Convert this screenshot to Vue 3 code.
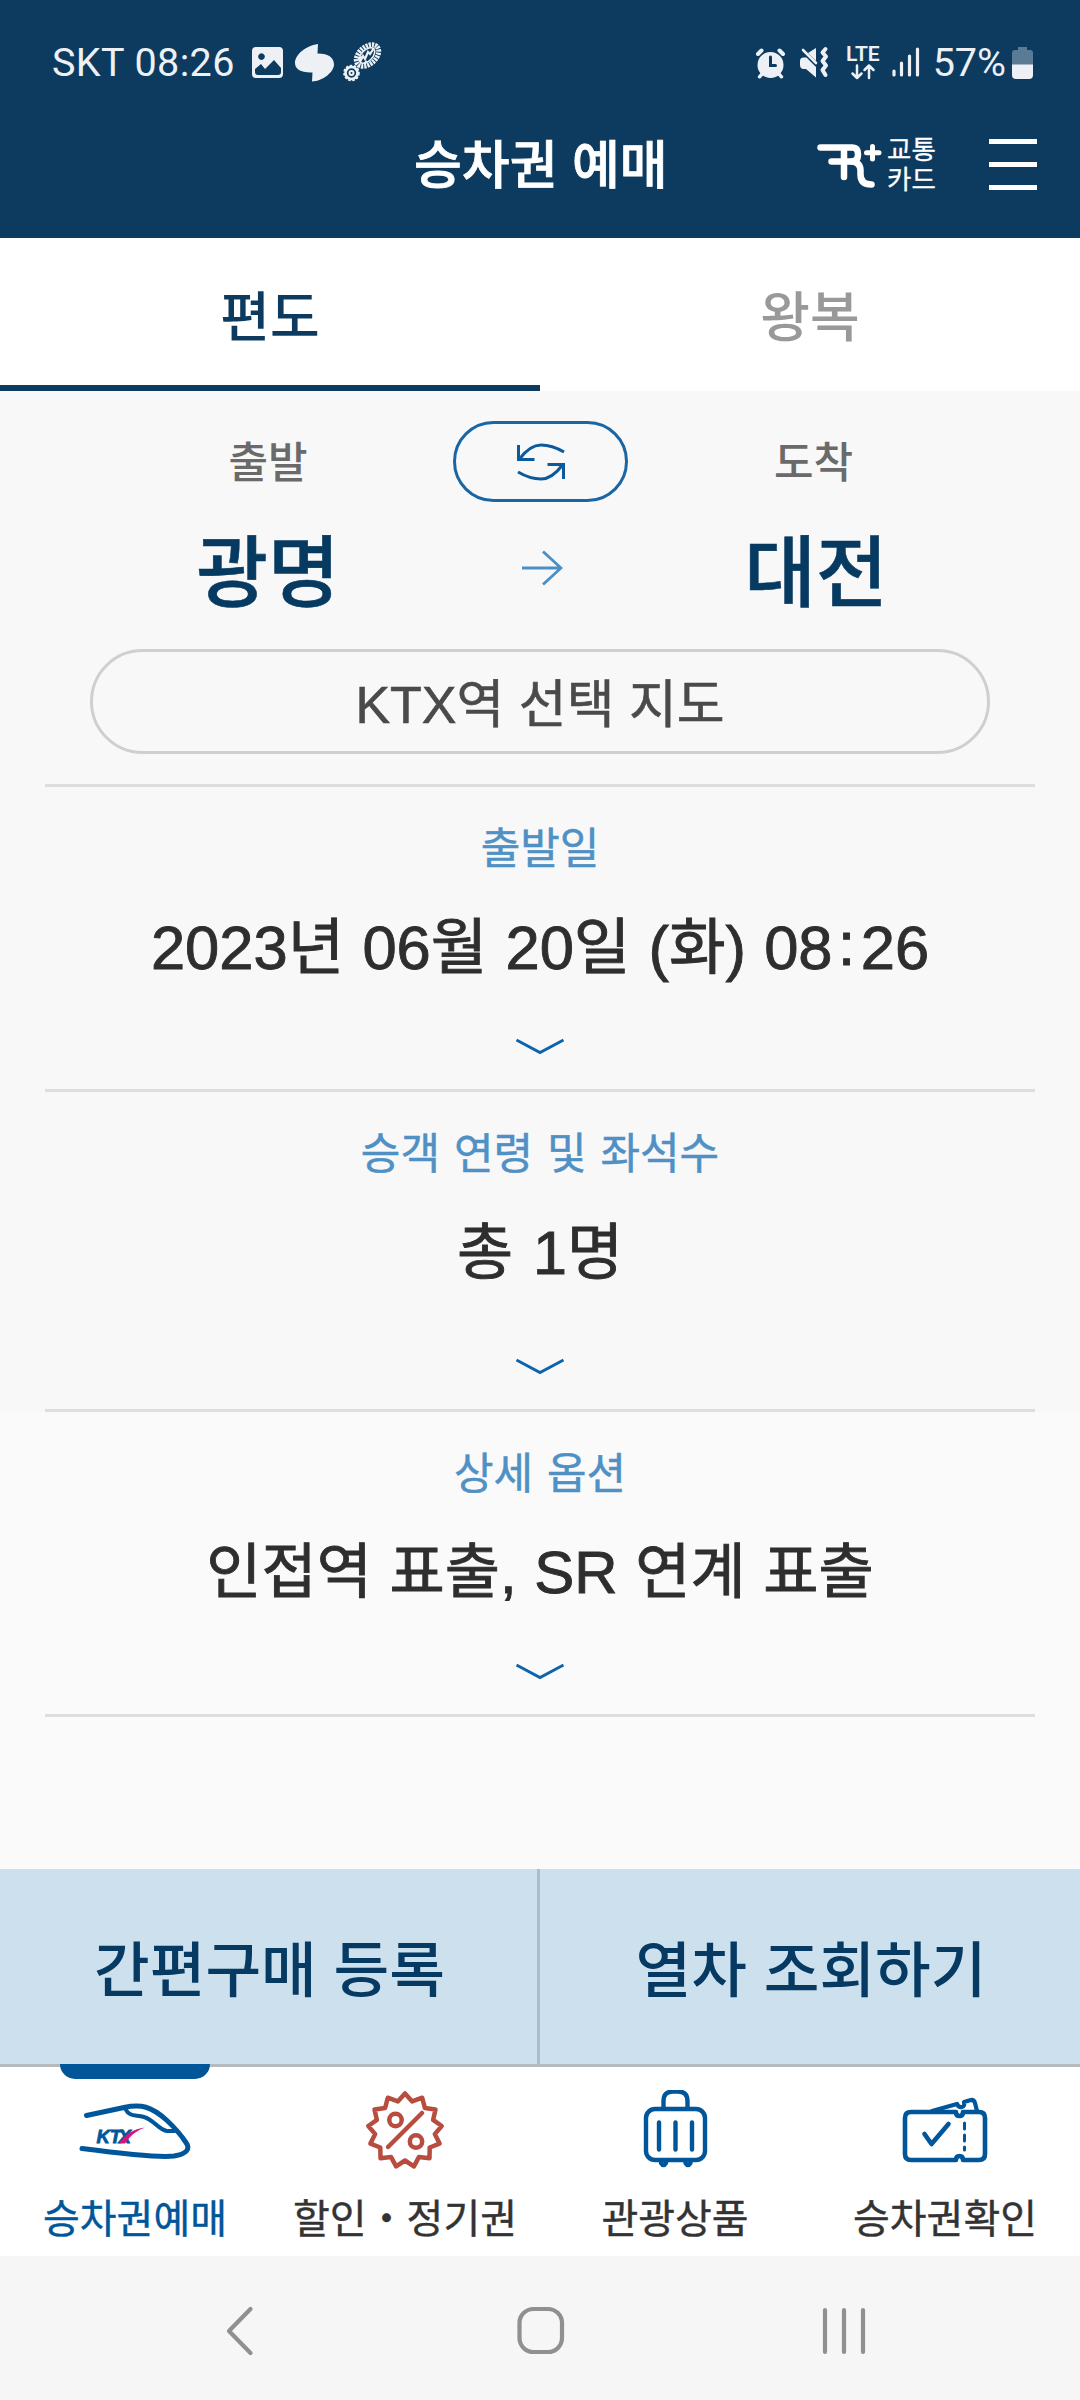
<template>
  <div class="screen">
    <header class="header">
      <div class="status">
        <span class="status-text clock">SKT 08:26</span>
        <svg class="status-left" viewBox="0 0 145 50">
          <!-- imagen -->
          <path
            fill-rule="evenodd"
            d="M11 9h23q4 0 4 4v23q0 4-4 4H11q-4 0-4-4V13q0-4 4-4zM10 31v3q0 3 3 3h20q3 0 3-3v-4l-7-8-9 9-4-5zM16.500 15.300a3.300 3.300 0 1 0 .01 0z"
          />
          <!-- remolino -->
          <path d="M73 6l-.5 9.500C84 15.500 89 20 89 26.500 89 34 78 43 67 43.500l.5-9C56 35 50 31 50 25 50 17 60 8 73 6z" />
          <!-- huella -->
          <g fill="none" stroke="#edf1f5">
            <ellipse cx="122.500" cy="17.500" rx="13" ry="8.500" transform="rotate(-42 122.500 17.500)" stroke-width="5" stroke-dasharray="2.200 .9" />
            <ellipse cx="122" cy="17.500" rx="9.500" ry="5.500" transform="rotate(-46 122 17.500)" stroke-width="1.500" />
            <path d="M115 24l3-6 2 3 3-7 2 2 4-6M113 21l4-2M119 26l3-3" stroke-width="2.200" />
            <circle cx="106.500" cy="35" r="6" stroke-width="2.600" />
            <circle cx="106.500" cy="35" r="7.400" stroke-width="1.800" stroke-dasharray="2.600 1.500" />
            <circle cx="106.500" cy="35" r="2" stroke-width="2" />
          </g>
        </svg>

        <svg class="status-right" viewBox="0 0 175 50">
          <!-- alarma -->
          <circle cx="20.500" cy="27" r="13" />
          <g fill="none" stroke="#edf1f5" stroke-linecap="round">
            <path d="M8 16l3.500-3.500M33 16l-3.500-3.500" stroke-width="4" />
            <path d="M12 36l-2.500 2.800M29 36l2.500 2.800" stroke-width="3.400" />
            <path d="M20.500 19v8.500h5" stroke="#0c3b5f" stroke-width="3" />
          </g>
          <!-- silencio y vibración -->
          <path d="M66 10v13l-8-8zM53.500 19.500h3L66 29v10.500l-10-8.500h-3q-3-.5-3-4v-4q0-3.500 3.500-3.500z" />
          <g fill="none" stroke="#edf1f5" stroke-linecap="round" stroke-linejoin="round">
            <path d="M53 12l13 13" stroke-width="2.600" />
            <path d="M75.500 11l-3 3.500 3.500 4-3.500 4.500 3.500 4.500-3.500 4.500 3 5" stroke-width="4" />
          </g>
          <!-- LTE -->
          <text x="96" y="23" class="lte">LTE</text>
          <g fill="none" stroke="#edf1f5" stroke-width="2.500" stroke-linecap="round" stroke-linejoin="round">
            <path d="M107 27.500v12.500M102.500 35.500l4.500 4.500 4.500-4.500M119 40V27.500M114.500 32l4.500-4.500 4.500 4.500" />
          </g>
          <!-- cobertura -->
          <g stroke="#edf1f5" stroke-width="3.200" stroke-linecap="round">
            <path d="M144 33v4M151.500 25v12M159.500 18v19M167.500 11v26" />
          </g>
        </svg>
        <span class="status-text">57%</span>
        <svg class="battery" viewBox="0 0 22 34">
          <path d="M6 1h9v3h3q3 0 3 3v12H0V7q0-3 3-3h3z" fill="#5b7b95" />
          <path d="M0 18.500h21V29q0 4-4 4H4q-4 0-4-4z" fill="#edf1f5" />
        </svg>
      </div>

      <div class="title-bar">
        <h1 class="title">승차권 예매</h1>
        <a class="rail-card">
          <svg class="rail-logo" viewBox="0 0 66 50">
            <g fill="none" stroke="#fff" stroke-width="6.500" stroke-linecap="round" stroke-linejoin="round">
              <path d="M4.500 7.500h32q5.500 0 5.500 7t-6.500 7H15.500" />
              <path d="M28 9v28" />
              <path d="M36 21.500q8.500 1 8.500 9v4q0 10 11 10" />
              <path d="M56.500 6.500v12.500M50.500 12.800h12.500" stroke-width="5" />
            </g>
          </svg>
          <span class="rail-text">교통<br />카드</span>
        </a>
        <button class="menu" aria-label="메뉴"><i></i><i></i><i></i></button>
      </div>
    </header>

    <nav class="tabs">
      <button
        v-for="tab in tabs"
        :key="tab"
        class="tab"
        :class="{ active: tab === activeTab }"
        @click="activeTab = tab"
      >
        {{ tab }}
      </button>
    </nav>

    <main class="content">
      <section class="route">
        <p class="route-label">출발</p>
        <button class="swap" aria-label="출발 도착 바꾸기" @click="swap">
          <svg viewBox="0 0 50 40" class="swap-icon">
            <g fill="none" stroke="#0b5b9c" stroke-width="3">
              <path d="M2.500 3v14.500h16M3.500 17Q14 3 25 3q11 0 23 7" />
              <path d="M47.500 37V22.500h-16M46.500 23Q36 37 25 37q-11 0-23-7" />
            </g>
          </svg>
        </button>
        <p class="route-label">도착</p>

        <p class="station">{{ from }}</p>
        <svg class="route-arrow" viewBox="0 0 42 36">
          <path d="M1 18h39M22 1.500L40 18 22 34.500" fill="none" stroke="#4a8fc6" stroke-width="2.800" />
        </svg>
        <p class="station arrival">{{ to }}</p>
      </section>

      <button class="map-button">KTX역 선택 지도</button>

      <section v-for="row in rows" :key="row.label" class="row" :class="row.id">
        <p class="row-label">{{ row.label }}</p>
        <p class="row-value">
          <template v-for="(part, i) in row.value.split(':')" :key="i"><span v-if="i" class="colon">:</span>{{ part }}</template>
        </p>
        <svg class="chevron" viewBox="0 0 50 17">
          <path d="M1.500 2L25 14.500 48.500 2" fill="none" stroke="#0b64ac" stroke-width="2.900" />
        </svg>
      </section>
    </main>

    <div class="actions">
      <button class="action">간편구매 등록</button>
      <button class="action">열차 조회하기</button>
    </div>

    <nav class="bottom-nav">
      <a class="nav-item active">
        <svg class="nav-icon" viewBox="0 0 130 80">
          <g fill="none" stroke="#00569a" stroke-width="5" stroke-linecap="round" stroke-linejoin="round">
            <path d="M16.500 25.500L54 17.500C71 14 81 16 97 30.500c8 7.500 13 13 19 22 5 7 0 11.500-12 13.500-14 2-50-2-92-7.500" />
            <path d="M55 18.500c5 9 10 6 19 8.500 10 3 15 13 23 14h8" stroke-width="4" />
          </g>
          <text x="26.500" y="53" class="ktx">KT</text>
          <text x="48.500" y="53" class="ktx">X</text>
          <path d="M49 53.500q9-14 26-16-12 4-20 16z" fill="#d6147d" />
        </svg>
        <span>승차권예매</span>
      </a>
      <a class="nav-item">
        <svg class="nav-icon" viewBox="0 0 130 80">
          <g fill="none" stroke="#b84c3e" stroke-width="4.500" stroke-linejoin="round" stroke-linecap="round">
            <polygon :points="burst" />
            <circle cx="55.500" cy="30" r="6.200" />
            <circle cx="76" cy="51.500" r="6.200" />
            <path d="M82 23L48 57" />
          </g>
        </svg>
        <span>할인・정기권</span>
      </a>
      <a class="nav-item">
        <svg class="nav-icon" viewBox="0 0 130 80">
          <g fill="none" stroke="#00569a" stroke-width="4.400" stroke-linecap="round">
            <rect x="36" y="19" width="59" height="51" rx="9" />
            <path d="M53.500 18V11q0-9.500 9.500-9.500h5q9.500 0 9.500 9.500v7" />
            <path d="M49 32.500v27M65.500 32.500v27M82 32.500v27" />
            <path d="M51 73q2.500 4 5 0M75.500 73q2.500 4 5 0" />
          </g>
        </svg>
        <span>관광상품</span>
      </a>
      <a class="nav-item">
        <svg class="nav-icon" viewBox="0 0 130 80">
          <g fill="none" stroke="#00569a" stroke-width="4.600" stroke-linecap="round" stroke-linejoin="round">
            <path d="M76 22H31q-6 0-6 6v36q0 6 6 6h45q0-4 3.500-4t3.500 4h16q6 0 6-6V28q0-6-6-6H83q0 4-3.500 4T76 22z" />
            <path d="M52 21l25-7q2 4 5 3 3-.5 2-5l7-2q3-.5 4 3l2 8" stroke-width="4.200" />
            <path d="M44.500 44l7 10 17-20" />
            <path d="M84.500 33v27" stroke-width="3" stroke-dasharray="6 6" />
          </g>
        </svg>
        <span>승차권확인</span>
      </a>
    </nav>

    <footer class="system-bar">
      <svg viewBox="0 0 1080 144">
        <g fill="none" stroke="#909090" stroke-width="4.200" stroke-linecap="round" stroke-linejoin="round">
          <path d="M250.500 53L229 75l21.500 22" />
          <rect x="519.500" y="53" width="42.500" height="43" rx="14" />
          <path d="M825 54v42M844 54v42M863 54v42" />
        </g>
      </svg>
    </footer>
  </div>
</template>

<script setup>
import { ref } from 'vue'

const tabs = ['편도', '왕복']
const activeTab = ref('편도')

const from = ref('광명')
const to = ref('대전')

const swap = () => {
  const tmp = from.value
  from.value = to.value
  to.value = tmp
}

const rows = [
  { id: 'date', label: '출발일', value: '2023년 06월 20일 (화) 08:26' },
  { id: 'people', label: '승객 연령 및 좌석수', value: '총 1명' },
  { id: 'options', label: '상세 옵션', value: '인접역 표출, SR 연계 표출' },
]

// Sello de descuento: estrella de 13 puntas
const burst = Array.from({ length: 26 }, (_, i) => {
  const r = i % 2 ? 30 : 37
  const a = (Math.PI * i) / 13 - Math.PI / 2
  return `${(65 + r * Math.cos(a)).toFixed(1)},${(40.5 + r * Math.sin(a)).toFixed(1)}`
}).join(' ')
</script>

<style>
body {
  background: #fafafa;
}
</style>

<style scoped>
.screen {
  width: 1080px;
  height: 2400px;
  display: flex;
  flex-direction: column;
  overflow: hidden;
  font-family: 'Liberation Sans', 'Noto Sans CJK KR', sans-serif;
  font-weight: 500;
  color: #2e2e2e;
}

p,
h1 {
  margin: 0;
}

button {
  padding: 0;
  border: 0;
  background: none;
  font: inherit;
  color: inherit;
}

/* Cabecera */
.header {
  height: 238px;
  flex: none;
  background: #0c3b5f;
  color: #fff;
}

.status {
  height: 100px;
  padding: 25px 46px 0 52px;
  box-sizing: border-box;
  display: flex;
  align-items: center;
}

.status-text {
  font-family: Roboto, sans-serif;
  font-size: 39.5px;
  font-weight: 400;
  line-height: 50px;
  color: #edf1f5;
  white-space: nowrap;
}

.clock {
  width: 193px;
  letter-spacing: 0.4px;
}

.status svg {
  flex: none;
  fill: #edf1f5;
}

.status-left {
  width: 145px;
  height: 50px;
}

.status-right {
  width: 175px;
  height: 50px;
  margin-left: auto;
  margin-right: 8px;
}

.battery {
  width: 22px;
  height: 34px;
  margin-left: 6px;
}

.lte {
  font-family: Roboto, sans-serif;
  font-size: 21px;
  font-weight: 600;
}

.title-bar {
  height: 138px;
  padding: 0 43px 9px 0;
  box-sizing: border-box;
  display: grid;
  grid-template-columns: 414px 402px 173px 48px;
  align-items: center;
}

.title {
  grid-column: 2;
  padding-top: 3px;
  font-size: 52px;
  font-weight: 500;
  line-height: 60px;
  -webkit-text-stroke: 0.8px #fff;
}

.rail-card {
  display: flex;
  align-items: center;
  gap: 5px;
}

.rail-logo {
  width: 66px;
  height: 50px;
}

.rail-text {
  font-size: 26.5px;
  font-weight: 400;
  line-height: 30px;
  -webkit-text-stroke: 0.3px #fff;
}

.menu {
  width: 48px;
  height: 51px;
  display: flex;
  flex-direction: column;
  justify-content: space-between;
}

.menu i {
  width: 48px;
  height: 5px;
  background: #fff;
}

/* Pestañas */
.tabs {
  height: 153px;
  flex: none;
  display: flex;
  background: #fff;
}

.tab {
  flex: 1;
  padding-top: 3px;
  border-bottom: 6px solid transparent;
  font-size: 54px;
  color: #999;
}

.tab.active {
  color: #0c3b5f;
  border-bottom-color: #0c3b5f;
}

/* Contenido */
.content {
  flex: 1;
  display: flex;
  flex-direction: column;
  background: linear-gradient(#f8f8f8 1021px, #fafafa 1021px);
}

.route {
  height: 255px;
  padding-top: 30px;
  padding-left: 83px;
  box-sizing: border-box;
  display: grid;
  grid-template-columns: 370px 175px 371px;
  grid-template-rows: 81px 131px;
  justify-items: center;
  align-items: center;
}

.route-label {
  padding-top: 3px;
  font-size: 43px;
  line-height: 60px;
  color: #6a6a6a;
}

.swap {
  width: 175px;
  height: 81px;
  box-sizing: border-box;
  border: 3px solid #1a66a3;
  border-radius: 41px;
  display: flex;
  align-items: center;
  justify-content: center;
}

.swap-icon {
  width: 50px;
  height: 40px;
}

.station {
  padding-top: 12px;
  font-size: 78px;
  font-weight: 500;
  line-height: 100px;
  color: #073a61;
  -webkit-text-stroke: 0.6px #073a61;
}

.station.arrival {
  padding-left: 5px;
}

.route-arrow {
  width: 42px;
  height: 36px;
  margin-left: 3px;
}

.map-button {
  width: 900px;
  height: 105px;
  margin: 3px auto 0;
  padding-bottom: 2px;
  flex: none;
  box-sizing: border-box;
  border: 3px solid #cfcfcf;
  border-radius: 53px;
  font-size: 52px;
  font-weight: 400;
  color: #4a4a4a;
  -webkit-text-stroke: 0.6px #4a4a4a;
}

.row {
  height: 305px;
  margin: 0 45px;
  flex: none;
  box-sizing: border-box;
  border-bottom: 3px solid #dedede;
  display: flex;
  flex-direction: column;
  align-items: center;
}

.row.date {
  height: 308px;
  margin-top: 30px;
  border-top: 3px solid #dedede;
}

.row.people {
  height: 320px;
}

.row-label {
  margin-top: 32px;
  font-size: 43px;
  font-weight: 400;
  line-height: 60px;
  word-spacing: 2px;
  color: #4f90c5;
  -webkit-text-stroke: 0.5px #4f90c5;
}

.row-value {
  margin-top: 29px;
  font-size: 60px;
  font-weight: 400;
  line-height: 80px;
  word-spacing: 1px;
  white-space: nowrap;
  -webkit-text-stroke: 0.9px #2e2e2e;
}

.people .row-value {
  font-size: 61px;
  word-spacing: 3px;
}

.date .row-value {
  font-size: 61.5px;
}

.colon {
  padding: 0 5.5px;
  vertical-align: 4px;
  line-height: 1;
}

.chevron {
  width: 50px;
  height: 17px;
  margin-top: auto;
  margin-bottom: 34px;
}

/* Botones de compra */
.actions {
  height: 198px;
  flex: none;
  box-sizing: border-box;
  display: flex;
  border-bottom: 3px solid #b6babd;
  background: #cde0ee;
}

.action {
  width: 540px;
  padding-left: 2px;
  padding-bottom: 3px;
  box-sizing: border-box;
  font-size: 60.5px;
  font-weight: 500;
  color: #063a62;
}

.action:first-child {
  border-right: 3px solid #abbdc9;
}

/* Menú inferior */
.bottom-nav {
  height: 189px;
  flex: none;
  display: grid;
  grid-template-columns: repeat(4, 270px);
  background: #fff;
}

.nav-item {
  position: relative;
  padding-top: 23px;
  display: flex;
  flex-direction: column;
  align-items: center;
  font-size: 40px;
  line-height: 50px;
  font-weight: 400;
  color: #333;
  white-space: nowrap;
  -webkit-text-stroke: 0.4px currentColor;
}

.nav-item.active {
  color: #005698;
}

.nav-item.active::before {
  content: '';
  position: absolute;
  top: -3px;
  left: 60px;
  width: 150px;
  height: 15px;
  border-radius: 0 0 15px 15px;
  background: #005698;
}

.nav-icon {
  width: 130px;
  height: 80px;
  margin-bottom: 24px;
}

.ktx {
  font-family: 'Liberation Sans', sans-serif;
  font-size: 18.5px;
  font-weight: 700;
  font-style: italic;
  fill: #00569a;
  stroke: #00569a;
  stroke-width: 0.8px;
}

.system-bar {
  height: 144px;
  flex: none;
  background: #f6f6f6;
}

.system-bar svg {
  display: block;
  width: 1080px;
  height: 144px;
}
</style>
